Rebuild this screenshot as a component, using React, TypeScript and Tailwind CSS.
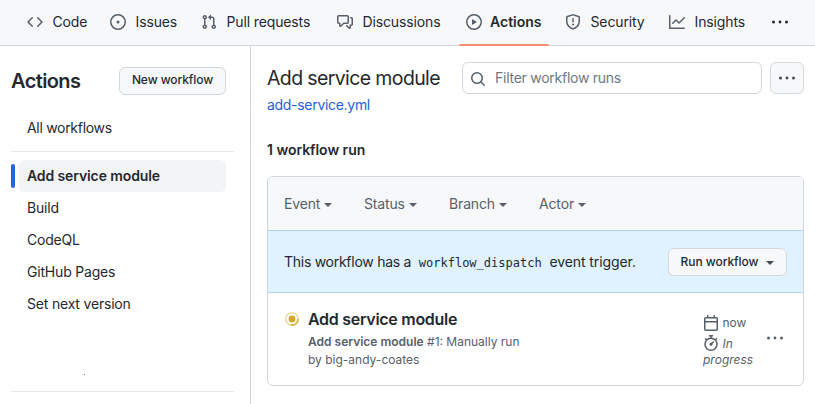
import type { ReactNode } from "react";

const ICONS = {
  code: "m11.28 3.22 4.25 4.25a.75.75 0 0 1 0 1.06l-4.25 4.25a.749.749 0 0 1-1.275-.326.749.749 0 0 1 .215-.734L13.94 8l-3.72-3.72a.749.749 0 0 1 .326-1.275.749.749 0 0 1 .734.215Zm-6.56 0a.751.751 0 0 1 1.042.018.751.751 0 0 1 .018 1.042L2.06 8l3.72 3.72a.749.749 0 0 1-.326 1.275.749.749 0 0 1-.734-.215L.47 8.53a.75.75 0 0 1 0-1.06Z",
  issue: "M8 9.5a1.5 1.5 0 1 0 0-3 1.5 1.5 0 0 0 0 3ZM8 0a8 8 0 1 1 0 16A8 8 0 0 1 8 0ZM1.5 8a6.5 6.5 0 1 0 13 0 6.5 6.5 0 0 0-13 0Z",
  pull: "M1.5 3.25a2.25 2.25 0 1 1 3 2.122v5.256a2.251 2.251 0 1 1-1.5 0V5.372A2.25 2.25 0 0 1 1.5 3.25Zm5.677-.177L9.573.677A.25.25 0 0 1 10 .854V2.5h1A2.5 2.5 0 0 1 13.5 5v5.628a2.251 2.251 0 1 1-1.5 0V5a1 1 0 0 0-1-1h-1v1.646a.25.25 0 0 1-.427.177L7.177 3.427a.25.25 0 0 1 0-.354ZM3.75 2.5a.75.75 0 1 0 0 1.5.75.75 0 0 0 0-1.5Zm0 9.5a.75.75 0 1 0 0 1.5.75.75 0 0 0 0-1.5Zm8.25.75a.75.75 0 1 0 1.5 0 .75.75 0 0 0-1.5 0Z",
  discussion: "M1.75 1h8.5c.966 0 1.75.784 1.75 1.75v5.5A1.75 1.75 0 0 1 10.25 10H7.061l-2.574 2.573A1.458 1.458 0 0 1 2 11.543V10h-.25A1.75 1.75 0 0 1 0 8.25v-5.5C0 1.784.784 1 1.75 1ZM1.5 2.75v5.5c0 .138.112.25.25.25h1a.75.75 0 0 1 .75.75v2.19l2.72-2.72a.749.749 0 0 1 .53-.22h3.5a.25.25 0 0 0 .25-.25v-5.5a.25.25 0 0 0-.25-.25h-8.5a.25.25 0 0 0-.25.25Zm13 2a.25.25 0 0 0-.25-.25h-.5a.75.75 0 0 1 0-1.5h.5c.966 0 1.75.784 1.75 1.75v5.5A1.75 1.75 0 0 1 14.25 12H14v1.543a1.458 1.458 0 0 1-2.487 1.03L9.22 12.28a.749.749 0 0 1 .326-1.275.749.749 0 0 1 .734.215l2.22 2.22v-2.19a.75.75 0 0 1 .75-.75h1a.25.25 0 0 0 .25-.25Z",
  play: "M8 0a8 8 0 1 1 0 16A8 8 0 0 1 8 0ZM1.5 8a6.5 6.5 0 1 0 13 0 6.5 6.5 0 0 0-13 0Zm4.879-2.773 4.264 2.559a.25.25 0 0 1 0 .428l-4.264 2.559A.25.25 0 0 1 6 10.559V5.442a.25.25 0 0 1 .379-.215Z",
  shield: "M7.467.133a1.748 1.748 0 0 1 1.066 0l5.25 1.68A1.75 1.75 0 0 1 15 3.48V7c0 1.566-.32 3.182-1.303 4.682-.983 1.498-2.585 2.813-5.032 3.855a1.697 1.697 0 0 1-1.33 0c-2.447-1.042-4.049-2.357-5.032-3.855C1.32 10.182 1 8.566 1 7V3.48a1.75 1.75 0 0 1 1.217-1.667Zm.61 1.429a.25.25 0 0 0-.153 0l-5.25 1.68a.25.25 0 0 0-.174.238V7c0 1.358.275 2.666 1.057 3.86.784 1.194 2.121 2.34 4.366 3.297a.196.196 0 0 0 .154 0c2.245-.956 3.582-2.104 4.366-3.298C13.225 9.666 13.5 8.36 13.5 7V3.48a.251.251 0 0 0-.174-.237l-5.25-1.68ZM8.75 4.75v3a.75.75 0 0 1-1.5 0v-3a.75.75 0 0 1 1.5 0ZM9 10.5a1 1 0 1 1-2 0 1 1 0 0 1 2 0Z",
  graph: "M1.5 1.75V13.5h13.75a.75.75 0 0 1 0 1.5H.75a.75.75 0 0 1-.75-.75V1.75a.75.75 0 0 1 1.5 0Zm14.28 2.53-5.25 5.25a.75.75 0 0 1-1.06 0L7 7.06 4.28 9.78a.751.751 0 0 1-1.042-.018.751.751 0 0 1-.018-1.042l3.25-3.25a.75.75 0 0 1 1.06 0L10 7.94l4.72-4.72a.751.751 0 0 1 1.042.018.751.751 0 0 1 .018 1.042Z",
  search: "M10.68 11.74a6 6 0 0 1-7.922-8.982 6 6 0 0 1 8.982 7.922l3.04 3.04a.749.749 0 0 1-.326 1.275.749.749 0 0 1-.734-.215ZM11.5 7a4.499 4.499 0 1 0-8.997 0A4.499 4.499 0 0 0 11.5 7Z",
  calendar: "M4.75 0a.75.75 0 0 1 .75.75V2h5V.75a.75.75 0 0 1 1.5 0V2h1.25c.966 0 1.75.784 1.75 1.75v10.5A1.75 1.75 0 0 1 13.25 16H2.75A1.75 1.75 0 0 1 1 14.25V3.75C1 2.784 1.784 2 2.75 2H4V.75A.75.75 0 0 1 4.75 0ZM2.5 7.5v6.75c0 .138.112.25.25.25h10.5a.25.25 0 0 0 .25-.25V7.5Zm10.75-4H2.75a.25.25 0 0 0-.25.25V6h11V3.75a.25.25 0 0 0-.25-.25Z",
  stopwatch: "M5.75.75A.75.75 0 0 1 6.5 0h3a.75.75 0 0 1 0 1.5h-.75v1l-.001.041a6.724 6.724 0 0 1 3.464 1.435l.007-.006.75-.75a.749.749 0 0 1 1.275.326.749.749 0 0 1-.215.734l-.75.75-.006.007a6.75 6.75 0 1 1-10.548 0L2.72 5.03l-.75-.75a.751.751 0 0 1 .018-1.042.751.751 0 0 1 1.042-.018l.75.75.007.006A6.72 6.72 0 0 1 7.25 2.541V1.5H6.5a.75.75 0 0 1-.75-.75ZM8 14.5a5.25 5.25 0 1 0-.001-10.501A5.25 5.25 0 0 0 8 14.5Zm.389-6.7 1.33-1.33a.75.75 0 1 1 1.061 1.06L9.45 8.861A1.503 1.503 0 0 1 8 10.75a1.499 1.499 0 1 1 .389-2.95Z",
};

type IconName = keyof typeof ICONS;

function Icon({ name, className = "" }: { name: IconName; className?: string }) {
  return (
    <svg viewBox="0 0 16 16" className={`size-4 shrink-0 fill-[#57606a] ${className}`}>
      <path fillRule="evenodd" d={ICONS[name]} />
    </svg>
  );
}

function Dots({ className = "" }: { className?: string }) {
  return (
    <svg viewBox="0 0 18 4" className={`h-1 w-[18px] shrink-0 ${className}`}>
      <circle cx="2.5" cy="2" r="1.5" />
      <circle cx="9" cy="2" r="1.4" />
      <circle cx="15.5" cy="2" r="1.5" />
    </svg>
  );
}

function Caret({ className = "" }: { className?: string }) {
  return (
    <svg viewBox="0 0 8 4" className={`h-1 w-2 shrink-0 ${className}`}>
      <path d="M0 0h8L4 4z" />
    </svg>
  );
}

const TABS: { icon: IconName; label: string; width: string; active?: boolean }[] = [
  { icon: "code", label: "Code", width: "w-[83px]" },
  { icon: "issue", label: "Issues", width: "w-[91px]" },
  { icon: "pull", label: "Pull requests", width: "w-[136px]" },
  { icon: "discussion", label: "Discussions", width: "w-[129px]" },
  { icon: "play", label: "Actions", width: "w-[99px]", active: true },
  { icon: "shield", label: "Security", width: "w-[104px]" },
  { icon: "graph", label: "Insights", width: "w-[102px]" },
];

function SideItem({ children }: { children: ReactNode }) {
  return <a className="flex h-8 items-center pl-4 tracking-[-0.19px]">{children}</a>;
}

const FILTERS = [
  { label: "Event", width: "w-20" },
  { label: "Status", width: "w-[85px]" },
  { label: "Branch", width: "w-[90px]" },
  { label: "Actor", width: "w-20" },
];

export default function App() {
  return (
    <div className="flex h-[404px] w-[815px] flex-col overflow-hidden bg-white font-['Inter',sans-serif] text-sm text-[#24292f]">
      <nav className="flex h-[46px] shrink-0 border-b border-[#d0d7de] bg-[#f6f8fa] pl-[27px]">
        {TABS.map((t) => (
          <a key={t.label} className={`relative flex h-[45px] items-center pb-px ${t.width}`}>
            <Icon name={t.icon} />
            <span className={t.active ? "ml-2 font-semibold" : "ml-[9.5px] tracking-[-0.13px]"}>{t.label}</span>
            {t.active && <i className="absolute -bottom-px -left-[7px] h-0.5 w-[90px] rounded-full bg-[#f6906f]" />}
          </a>
        ))}
        <Dots className="mt-5 fill-[#24292f]" />
      </nav>

      <div className="flex flex-1">
        <aside className="flex w-[251px] flex-col border-r border-[#d0d7de] pl-[11px]">
          <header className="flex h-[66px] items-center justify-between pr-6 pt-1">
            <h1 className="text-xl font-semibold tracking-[-0.6px]">Actions</h1>
            <button className="h-7 w-[107px] rounded-md border border-[#d5d8da] bg-[#f6f8fa] pb-0.5 text-xs font-medium tracking-[-0.08px]">New workflow</button>
          </header>
          <a className="flex h-8 items-center pl-4 tracking-[-0.3px]">All workflows</a>
          <hr className="mr-4 mt-[7px] border-[#d8dee4]/70" />
          <div className="mt-2 flex items-center gap-1">
            <i className="h-6 w-1 rounded-md bg-[#2764dc]" />
            <a className="flex h-8 w-[207px] items-center rounded-md bg-[#f3f4f6] pl-2 font-semibold tracking-[-0.11px]">Add service module</a>
          </div>
          <SideItem>Build</SideItem>
          <SideItem>CodeQL</SideItem>
          <SideItem>GitHub Pages</SideItem>
          <SideItem>Set next version</SideItem>
          <i className="ml-[73px] mt-[54px] size-px bg-[#777]" />
          <hr className="mr-4 mt-4 border-[#d8dee4]/70" />
        </aside>

        <main className="flex flex-1 flex-col pl-4 pr-[11px]">
          <div className="mt-4 flex h-8 items-center">
            <h2 className="w-[195px] shrink-0 whitespace-nowrap pt-0.5 text-[19.5px] tracking-[-0.62px]">Add service module</h2>
            <label className="flex h-8 w-[300px] shrink-0 items-center gap-2 rounded-md border border-[#d0d7de] pl-[7px] tracking-[-0.26px] text-[#6e7781]">
              <Icon name="search" className="mt-0.5" />
              <span className="pl-px">Filter workflow runs</span>
            </label>
            <button className="ml-2 flex h-8 w-[34px] shrink-0 items-center justify-center rounded-md border border-[#d5d8da] bg-[#f6f8fa]">
              <Dots className="fill-[#424a53]" />
            </button>
          </div>
          <a className="leading-[22px] tracking-[-0.3px] text-[#1f62dc]">add-service.yml</a>
          <strong className="mt-6 font-semibold leading-5 tracking-[-0.03px]">1 workflow run</strong>

          <section className="mt-4 h-[210px] overflow-hidden rounded-md border border-[#d0d7de]">
            <div className="flex h-[53px] items-center bg-[#f6f8fa] pl-4 text-[#57606a]">
              {FILTERS.map((f) => (
                <button key={f.label} className={`flex items-center gap-1 tracking-[-0.15px] ${f.width}`}>
                  {f.label}
                  <Caret className="mt-0.5 fill-[#57606a]" />
                </button>
              ))}
            </div>
            <div className="flex h-[63px] items-center justify-between border-y border-[#b0d3fa] bg-[#e0f2ff] pl-4 pr-4">
              <p>
                <span className="tracking-[-0.27px]">This workflow has a </span>
                <code className="px-1 font-['DejaVu_Sans_Mono',monospace] text-xs">workflow_dispatch</code>
                <span className="tracking-[-0.09px]"> event trigger.</span>
              </p>
              <button className="flex h-7 w-[119px] items-center justify-center gap-2 rounded-md border border-[#d5d8da] bg-[#f6f8fa] text-xs font-medium tracking-[-0.05px]">
                Run workflow
                <Caret className="mt-0.5 fill-[#424a53]" />
              </button>
            </div>
            <div className="flex pl-4 pt-[15px]">
              <svg viewBox="0 0 16 16" className="mt-[3px] size-4">
                <circle cx="8" cy="8" r="6.2" fill="none" stroke="#f0dfae" strokeWidth="1.8" />
                <path d="M14.2 8A6.2 6.2 0 0 1 6.5 14" fill="none" stroke="#dcb94f" strokeWidth="1.8" />
                <circle cx="8" cy="8" r="3.4" fill="#d4a72c" />
              </svg>
              <div className="ml-2 w-[395px]">
                <h3 className="text-base font-semibold leading-[22px] tracking-[-0.28px]">Add service module</h3>
                <p className="mt-[3px] text-xs leading-[18px] text-[#57606a]">
                  <b className="font-semibold">Add service module</b> #1: Manually run
                  <br />
                  by big-andy-coates
                </p>
              </div>
              <div className="mt-[5px] w-[63px] text-xs text-[#57606a]">
                <div className="flex h-5 items-center gap-[3.5px]"><Icon name="calendar" />now</div>
                <div className="flex h-5 items-center gap-[3.5px] italic"><Icon name="stopwatch" /><span className="pt-px">In</span></div>
                <div className="-mt-[1.5px] italic leading-4">progress</div>
              </div>
              <Dots className="mt-[27.5px] fill-[#57606a]" />
            </div>
          </section>
        </main>
      </div>
    </div>
  );
}
